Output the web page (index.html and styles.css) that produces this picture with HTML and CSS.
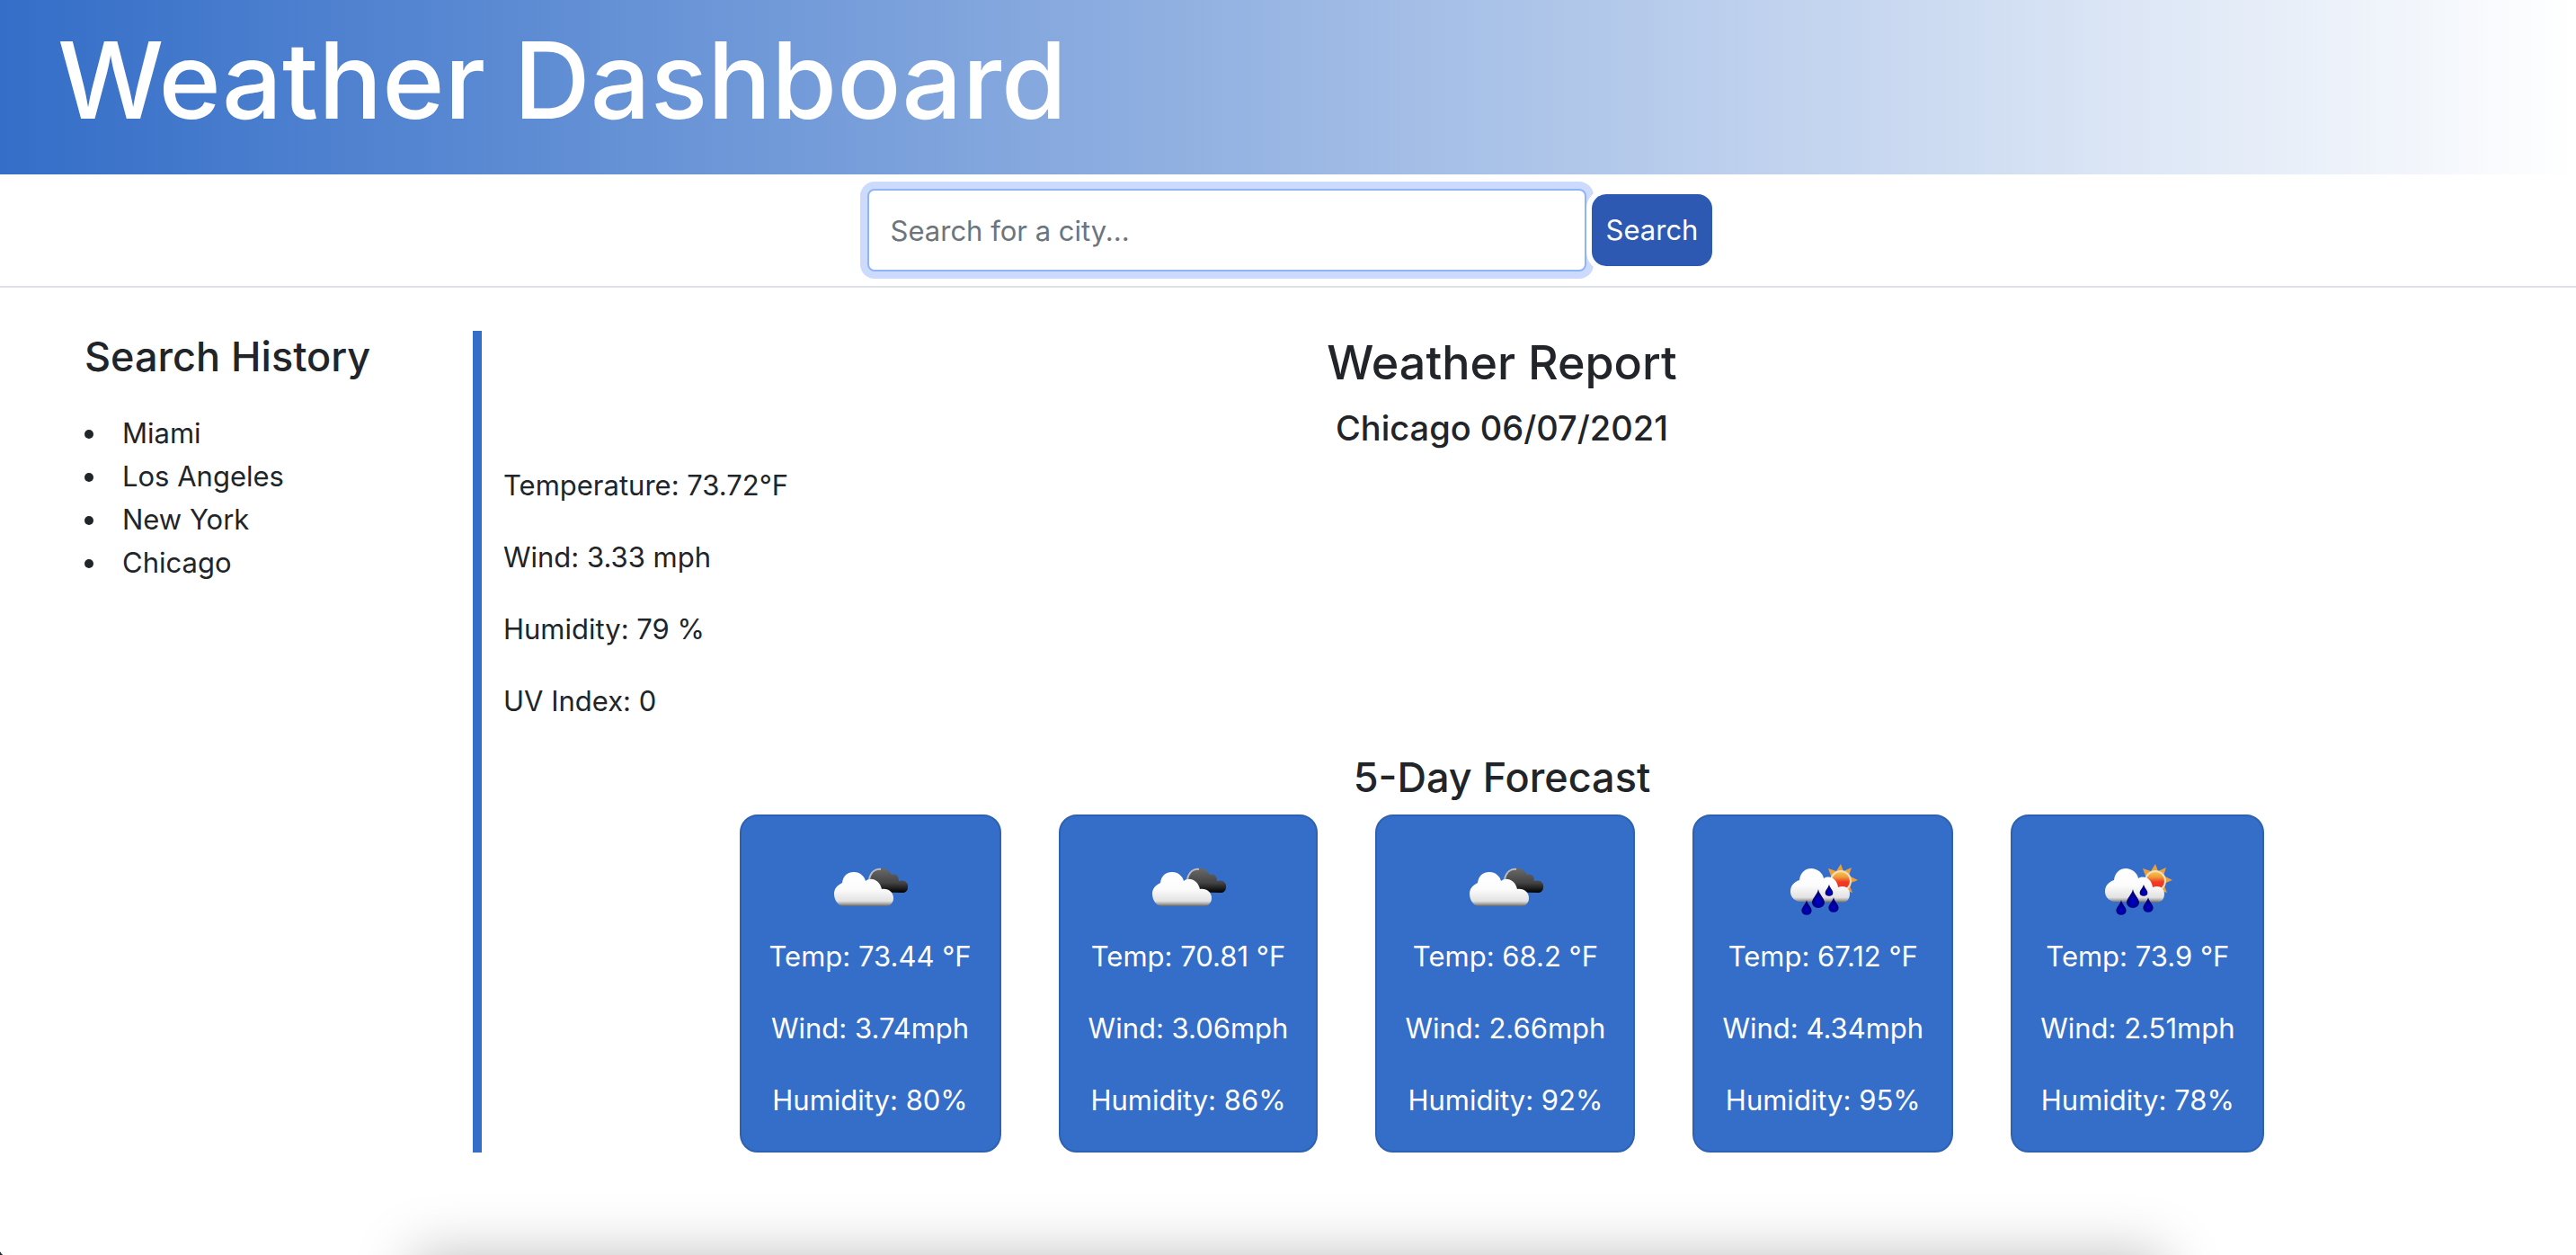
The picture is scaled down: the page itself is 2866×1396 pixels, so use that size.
FILE: index.html
```html
<!DOCTYPE html>
<html lang="en">
<head>
<meta charset="utf-8">
<meta name="viewport" content="width=device-width, initial-scale=1">
<title>Weather Dashboard</title>
<link rel="stylesheet" href="styles.css">
</head>
<body>
<svg class="defs" aria-hidden="true">
  <defs>
    <linearGradient id="cloud-fill" x1="0" y1="0" x2="0" y2="1">
      <stop offset="0" stop-color="#fff"/>
      <stop offset=".5" stop-color="#fcfcfc"/>
      <stop offset=".85" stop-color="#e2e2e2"/>
      <stop offset=".93" stop-color="#a8a8a8"/>
      <stop offset="1" stop-color="#666"/>
    </linearGradient>
    <linearGradient id="dark-fill" x1="0" y1="0" x2="0" y2="1">
      <stop offset="0" stop-color="#6a6a6a"/>
      <stop offset=".6" stop-color="#444"/>
      <stop offset="1" stop-color="#000"/>
    </linearGradient>
    <linearGradient id="sun-fill" x1="0" y1="0" x2="0" y2="1">
      <stop offset="0" stop-color="#f6d04c"/>
      <stop offset=".3" stop-color="#f29a3a"/>
      <stop offset=".55" stop-color="#ee3b24"/>
      <stop offset="1" stop-color="#ee3424"/>
    </linearGradient>
    <radialGradient id="drop-fill" cx=".5" cy=".68" r=".5">
      <stop offset="0" stop-color="#0000d8"/>
      <stop offset="1" stop-color="#00006a"/>
    </radialGradient>
    <path id="drop" d="M0-10C1-4 7 0 7 5A7 6 0 0 1-7 5C-7 0-1-4 0-10Z"/>
    <symbol id="cloudy" viewBox="0 0 100 100">
      <path d="M50 52C48 44 49 29 59 26C65 24 71 27 74 33C79 31 82 35 82 40C88 38 93 42 92 47C92 51 89 53 86 53Z" fill="url(#dark-fill)"/>
      <path d="M49 38C51 30 56 26 62 27" fill="none" stroke="#bdbdbd" stroke-width="2"/>
      <path d="M20 68C14 67 10 61 10 54C10 49 13 45 19 42C20 34 25 30 32 30C39 30 44 35 45 40C51 35 61 39 63 49C71 48 76 53 76 59C76 64 73 67 69 68Z" fill="url(#cloud-fill)"/>
    </symbol>
    <symbol id="showers" viewBox="0 0 100 100">
      <path d="M70 21L73 29L82 25L79 34L89 39L79 43L83 53L73 50L66 54L56 26L65 29Z" fill="#eba03c"/>
      <circle cx="70" cy="40" r="11" fill="url(#sun-fill)" stroke="#f3dfbd" stroke-width="2"/>
      <path d="M24 63C18 62 14 57 14 52C14 45 18 41 24 39C25 30 31 26 37 26C44 26 50 31 51 37C58 33 66 38 67 47C74 44 80 48 80 54C80 60 77 63 73 64Z" fill="url(#cloud-fill)"/>
      <g fill="url(#drop-fill)">
        <use href="#drop" transform="translate(45 59)"/>
        <use href="#drop" transform="translate(57 50) scale(.62)"/>
        <use href="#drop" transform="translate(62 66) scale(.8)"/>
        <use href="#drop" transform="translate(32 69) scale(.8)"/>
      </g>
    </symbol>
  </defs>
</svg>

<header class="banner">
  <h1>Weather Dashboard</h1>
</header>

<form class="search" role="search">
  <input class="search-input" type="search" aria-label="City" placeholder="Search for a city...">
  <button class="search-button" type="button">Search</button>
</form>

<div class="page">
  <aside class="history">
    <h3>Search History</h3>
    <ul class="history-list">
      <li>Miami</li>
      <li>Los Angeles</li>
      <li>New York</li>
      <li>Chicago</li>
    </ul>
  </aside>
  <main class="report">
    <h2>Weather Report</h2>
    <h4>Chicago 06/07/2021</h4>
    <div class="current">
      <p>Temperature: 73.72°F</p>
      <p>Wind: 3.33 mph</p>
      <p>Humidity: 79 %</p>
      <p>UV Index: 0</p>
    </div>
    <h3>5-Day Forecast</h3>
    <div class="forecast">
      <article class="card">
        <svg class="icon" role="img" aria-label="Broken clouds"><use href="#cloudy"/></svg>
        <p>Temp: 73.44 °F</p>
        <p>Wind: 3.74mph</p>
        <p>Humidity: 80%</p>
      </article>
      <article class="card">
        <svg class="icon" role="img" aria-label="Broken clouds"><use href="#cloudy"/></svg>
        <p>Temp: 70.81 °F</p>
        <p>Wind: 3.06mph</p>
        <p>Humidity: 86%</p>
      </article>
      <article class="card">
        <svg class="icon" role="img" aria-label="Broken clouds"><use href="#cloudy"/></svg>
        <p>Temp: 68.2 °F</p>
        <p>Wind: 2.66mph</p>
        <p>Humidity: 92%</p>
      </article>
      <article class="card">
        <svg class="icon" role="img" aria-label="Rain showers"><use href="#showers"/></svg>
        <p>Temp: 67.12 °F</p>
        <p>Wind: 4.34mph</p>
        <p>Humidity: 95%</p>
      </article>
      <article class="card">
        <svg class="icon" role="img" aria-label="Rain showers"><use href="#showers"/></svg>
        <p>Temp: 73.9 °F</p>
        <p>Wind: 2.51mph</p>
        <p>Humidity: 78%</p>
      </article>
    </div>
  </main>
</div>
<div class="dock-shadow"></div>
<div class="window-corner"></div>
</body>
</html>
```
FILE: styles.css
```css
* {
  box-sizing: border-box;
}

body {
  margin: 0;
  background: #fff;
  color: #212529;
  font-family: Inter, "Liberation Sans", sans-serif;
  font-size: 31px;
  line-height: 48px;
}

h1, h2, h3, h4, p, ul {
  margin: 0;
}

h1, h2, h3, h4 {
  font-weight: 500;
}

h1 {
  font-size: 118px;
  line-height: 154px;
}

h2 {
  margin-bottom: 12px;
  font-size: 52px;
  line-height: 72px;
}

h3 {
  font-size: 45px;
  line-height: 58px;
}

h4 {
  font-size: 38px;
  line-height: 48px;
}

.defs {
  position: absolute;
  width: 0;
  height: 0;
}

.banner {
  padding: 12px 64px 28px;
  background: linear-gradient(to right, #346ec8, #fff);
  color: #fff;
}

.search {
  display: flex;
  align-items: center;
  justify-content: center;
  gap: 6px;
  padding: 16px 0 16px 4px;
  border-bottom: 2px solid #dee2e6;
}

.search-input {
  width: 800px;
  height: 92px;
  padding: 12px 24px;
  border: 2px solid #8fb4f8;
  border-radius: 8px;
  outline: 0;
  box-shadow: 0 0 0 8px #cbdafd;
  background: #fff;
  font: inherit;
  appearance: none;
}

.search-input::placeholder {
  color: #6c757d;
  opacity: 1;
}

.search-button {
  padding: 16px;
  border: 0;
  border-radius: 16px;
  box-shadow: 0 0 0 6px #fff;
  background: #2d59b3;
  color: #fff;
  font: inherit;
}

.page {
  display: flex;
  padding: 48px 60px 48px 94px;
}

.history {
  flex: 0 0 432px;
}

.history-list {
  margin-top: 32px;
  padding: 0;
  list-style: disc inside;
}

.report {
  flex: 1;
  border-left: 10px solid #346ec8;
  text-align: center;
}

.current {
  display: flex;
  flex-direction: column;
  gap: 32px;
  padding: 16px 24px 32px;
  text-align: left;
}

.forecast {
  display: flex;
  justify-content: center;
  gap: 64px;
  margin-top: 12px;
}

.card {
  display: flex;
  flex-direction: column;
  align-items: center;
  padding: 32px 31px;
  border: 2px solid #2f61b1;
  border-radius: 20px;
  background: #346ec8;
  color: #fff;
}

.card p + p {
  margin-top: 32px;
}

.icon {
  width: 100px;
  height: 100px;
}

.dock-shadow {
  position: fixed;
  top: 100%;
  left: 16%;
  right: 16%;
  height: 200px;
  box-shadow: 0 0 60px rgba(0, 0, 0, .25);
}

.window-corner {
  position: fixed;
  left: 0;
  bottom: 0;
  width: 6px;
  height: 8px;
  background: radial-gradient(ellipse at top right, transparent 75%, #222a33 80%);
}
```
